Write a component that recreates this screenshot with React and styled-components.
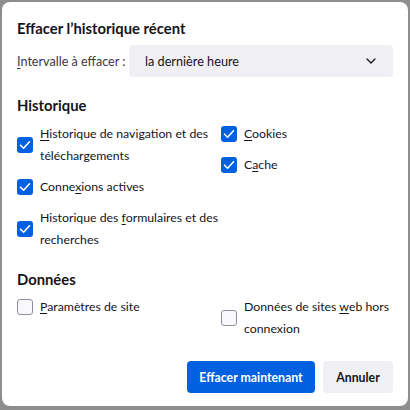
import React from "react";
import styled, { createGlobalStyle } from "styled-components";

const Global = createGlobalStyle`
	html, body {
		margin: 0;
		padding: 0;
		background: #8e8e8e;
	}
	body {
		font-family: Lato, "Noto Sans", sans-serif;
		color: #15141a;
	}
`;

const Dialog = styled.div`
	box-sizing: border-box;
	width: 406px;
	height: 404px;
	margin: 2px;
	background: #ffffff;
	border-radius: 8px;
	padding: 16px 15px 13px 15px;
	display: flex;
	flex-direction: column;
`;

const Title = styled.div`
	font-size: 14.8px;
	font-weight: 700;
	line-height: 20px;
`;

const RangeRow = styled.div`
	display: flex;
	align-items: center;
	margin-top: 7px;
`;

const RangeLabel = styled.label`
	font-size: 12.6px;
	color: #3a3944;
	width: 112px;
	white-space: nowrap;
`;

const Select = styled.div`
	flex: 1;
	height: 32px;
	background: #f0f0f4;
	border-radius: 4px;
	display: flex;
	align-items: center;
	justify-content: space-between;
	padding: 0 17px 0 16px;
	font-size: 12.7px;
`;

const Heading = styled.div`
	font-size: 14.8px;
	font-weight: 700;
	line-height: 20px;
	margin-top: ${(p) => p.top}px;
`;

const Columns = styled.div`
	display: grid;
	grid-template-columns: 204px 1fr;
	margin-top: ${(p) => p.top}px;
`;

const Column = styled.div`
	display: flex;
	flex-direction: column;
	gap: 9px;
`;

const Item = styled.label`
	display: flex;
	align-items: center;
	gap: 7px;
	font-size: 12.3px;
	line-height: 22px;
`;

const Text = styled.span`
	max-width: ${(p) => p.max || 181}px;
`;

const Box = styled.span`
	flex: none;
	box-sizing: border-box;
	width: 16px;
	height: 16px;
	border-radius: 3px;
	display: flex;
	align-items: center;
	justify-content: center;
	background: ${(p) => (p.checked ? "#0061e0" : "#f9f9fb")};
	border: ${(p) => (p.checked ? "none" : "1px solid #8f8f9d")};
`;

const Key = styled.span`
	text-decoration: underline;
	text-decoration-thickness: 1px;
	text-underline-offset: 2px;
`;

const Footer = styled.div`
	margin-top: auto;
	display: flex;
	justify-content: flex-end;
	gap: 8px;
`;

const Button = styled.button`
	width: ${(p) => p.width}px;
	height: 32px;
	border: none;
	border-radius: 4px;
	padding: 0;
	font-family: inherit;
	font-size: 12.3px;
	font-weight: 700;
	background: ${(p) => (p.primary ? "#0061e0" : "#f0f0f4")};
	color: ${(p) => (p.primary ? "#ffffff" : "#15141a")};
`;

function Check({ checked, children, max }) {
	return (
		<Item>
			<Box checked={checked}>
				{checked && (
					<svg width="12" height="10" viewBox="0 0 12 10">
						<path
							d="M1.5 5.2 L4.6 8.2 L10.5 1.8"
							fill="none"
							stroke="#fff"
							strokeWidth="1.6"
							strokeLinecap="round"
							strokeLinejoin="round"
						/>
					</svg>
				)}
			</Box>
			<Text max={max}>{children}</Text>
		</Item>
	);
}

export default function App() {
	return (
		<>
			<Global />
			<Dialog>
				<Title>Effacer l’historique récent</Title>
				<RangeRow>
					<RangeLabel>
						<Key>I</Key>ntervalle à effacer :
					</RangeLabel>
					<Select>
						<span>la dernière heure</span>
						<svg width="10" height="6" viewBox="0 0 10 6">
							<path
								d="M1 1 L5 5 L9 1"
								fill="none"
								stroke="#15141a"
								strokeWidth="1.3"
								strokeLinecap="round"
								strokeLinejoin="round"
							/>
						</svg>
					</Select>
				</RangeRow>

				<Heading top={18}>Historique</Heading>
				<Columns top={8}>
					<Column>
						<Check checked>
							<Key>H</Key>istorique de navigation et des téléchargements
						</Check>
						<Check checked>
							Conne<Key>x</Key>ions actives
						</Check>
						<Check checked>
							Historique des <Key>f</Key>ormulaires et des recherches
						</Check>
					</Column>
					<Column>
						<Check checked>
							<Key>C</Key>ookies
						</Check>
						<Check checked>
							C<Key>a</Key>che
						</Check>
					</Column>
				</Columns>

				<Heading top={18}>Données</Heading>
				<Columns top={7}>
					<Column>
						<Check>
							<Key>P</Key>aramètres de site
						</Check>
					</Column>
					<Column>
						<Check max={150}>
							Données de sites <Key>w</Key>eb hors connexion
						</Check>
					</Column>
				</Columns>

				<Footer>
					<Button primary width={128}>
						Effacer maintenant
					</Button>
					<Button width={70}>Annuler</Button>
				</Footer>
			</Dialog>
		</>
	);
}
